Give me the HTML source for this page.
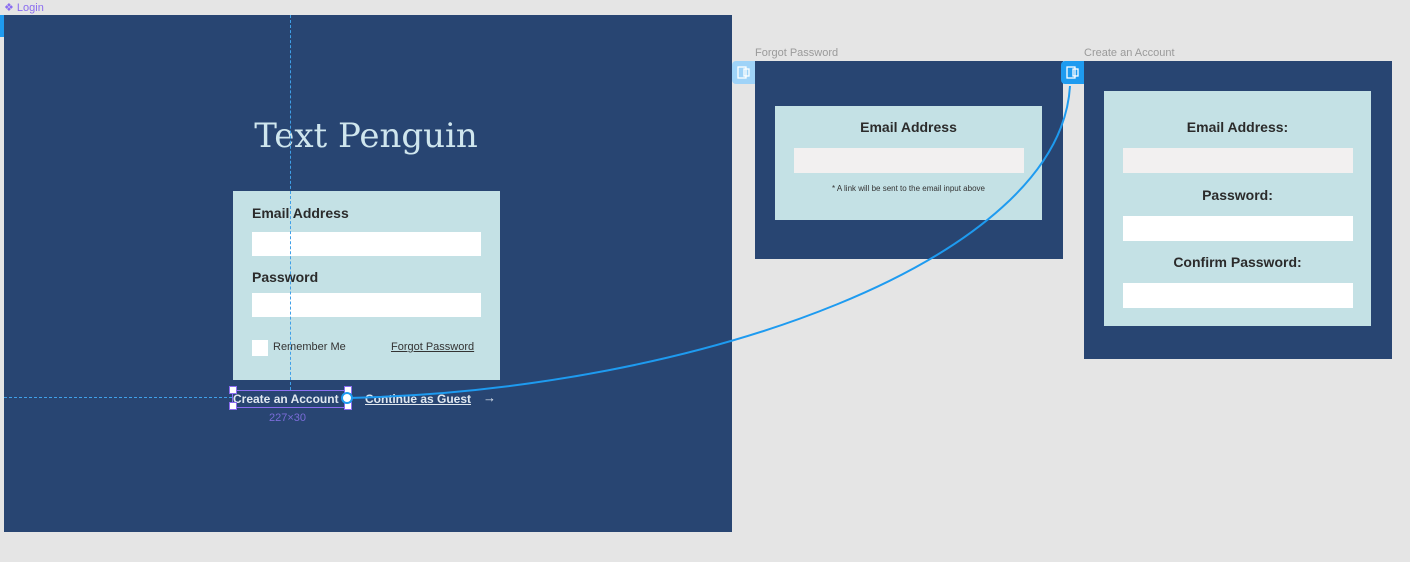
<!DOCTYPE html>
<html><head><style>
body{margin:0;width:1410px;height:562px;background:#e5e5e5;position:relative;overflow:hidden;font-family:"Liberation Sans",sans-serif}
.a{position:absolute}
.f{background:#284572}
.p{background:#c4e1e5}
.in{background:#fff}
.lb{font-weight:bold;color:#2b2b2b;font-size:14px}
.cap{color:#9a9a9a;font-size:11px}
</style></head><body>
<div class="a" style="left:4px;top:1px;font-size:11px;color:#8a6cf0">❖ Login</div>
<div class="a f" style="left:4px;top:15px;width:728px;height:517px"></div>
<div class="a" style="left:0;top:15px;width:4px;height:22px;background:#1e9bf0"></div>
<div class="a" style="left:0;top:116px;width:732px;text-align:center;font-family:'DejaVu Serif','Liberation Serif',serif;font-size:34px;color:#cfe6ee">Text Penguin</div>
<div class="a p" style="left:233px;top:191px;width:267px;height:189px"></div>
<div class="a lb" style="left:252px;top:205px">Email Address</div>
<div class="a in" style="left:252px;top:232px;width:229px;height:24px"></div>
<div class="a lb" style="left:252px;top:269px">Password</div>
<div class="a in" style="left:252px;top:293px;width:229px;height:24px"></div>
<div class="a in" style="left:252px;top:340px;width:16px;height:16px"></div>
<div class="a" style="left:273px;top:341px;font-size:11px;color:#333">Remember Me</div>
<div class="a" style="left:391px;top:341px;font-size:11px;color:#333;text-decoration:underline">Forgot Password</div>
<div class="a" style="left:290px;top:15px;height:375px;border-left:1px dashed #3fa0e8"></div>
<div class="a" style="left:4px;top:397px;width:228px;border-top:1px dashed #3fa0e8"></div>
<div class="a" style="left:232px;top:390px;width:116px;height:16px;border:1px solid #8a6cf0"></div>
<div class="a" style="left:233px;top:392px;font-size:12px;font-weight:bold;color:#e0e8f0;width:110px;overflow:hidden;white-space:nowrap">Create an Account</div>
<div class="a" style="left:365px;top:392px;font-size:12px;font-weight:bold;color:#e0e8f0;text-decoration:underline">Continue as Guest</div>
<div class="a" style="left:483px;top:390px;font-size:13px;color:#e0e8f0">→</div>
<div class="a" style="left:269px;top:412px;font-size:11px;color:#7a6cd8">227×30</div>
<div class="a" style="left:229px;top:386px;width:6px;height:6px;background:#fff;border:1px solid #8a6cf0"></div>
<div class="a" style="left:344px;top:386px;width:6px;height:6px;background:#fff;border:1px solid #8a6cf0"></div>
<div class="a" style="left:229px;top:402px;width:6px;height:6px;background:#fff;border:1px solid #8a6cf0"></div>
<div class="a" style="left:344px;top:402px;width:6px;height:6px;background:#fff;border:1px solid #8a6cf0"></div>

<div class="a cap" style="left:755px;top:47px">Forgot Password</div>
<div class="a f" style="left:755px;top:61px;width:308px;height:198px"></div>
<div class="a" style="left:732px;top:61px;width:23px;height:23px;background:#9fd3f8;border-radius:4px 0 0 4px"></div>
<div class="a p" style="left:775px;top:106px;width:267px;height:114px"></div>
<div class="a lb" style="left:775px;top:119px;width:267px;text-align:center">Email Address</div>
<div class="a" style="left:794px;top:148px;width:230px;height:25px;background:#f2f0f0"></div>
<div class="a" style="left:775px;top:184px;width:267px;text-align:center;font-size:8px;color:#333">* A link will be sent to the email input above</div>

<div class="a cap" style="left:1084px;top:47px">Create an Account</div>
<div class="a f" style="left:1084px;top:61px;width:308px;height:298px"></div>
<div class="a" style="left:1061px;top:61px;width:23px;height:23px;background:#1e9bf0;border-radius:4px 0 0 4px"></div>
<div class="a p" style="left:1104px;top:91px;width:267px;height:235px"></div>
<div class="a lb" style="left:1104px;top:119px;width:267px;text-align:center">Email Address:</div>
<div class="a" style="left:1123px;top:148px;width:230px;height:25px;background:#f2f0f0"></div>
<div class="a lb" style="left:1104px;top:187px;width:267px;text-align:center">Password:</div>
<div class="a in" style="left:1123px;top:216px;width:230px;height:25px"></div>
<div class="a lb" style="left:1104px;top:254px;width:267px;text-align:center">Confirm Password:</div>
<div class="a in" style="left:1123px;top:283px;width:230px;height:25px"></div>

<svg class="a" style="left:0;top:0" width="1410" height="562">
<path d="M348 398 C 700 390, 1060 260, 1070 86" fill="none" stroke="#1e9bf0" stroke-width="2"/>
<circle cx="347" cy="398" r="5" fill="#fff" stroke="#1e9bf0" stroke-width="2"/>
<g fill="none" stroke="#fff" stroke-width="1.3"><rect x="738" y="67" width="8" height="11"/><rect x="744" y="69" width="5" height="7"/>
<rect x="1067" y="67" width="8" height="11"/><rect x="1073" y="69" width="5" height="7"/></g>
</svg>
</body></html>
